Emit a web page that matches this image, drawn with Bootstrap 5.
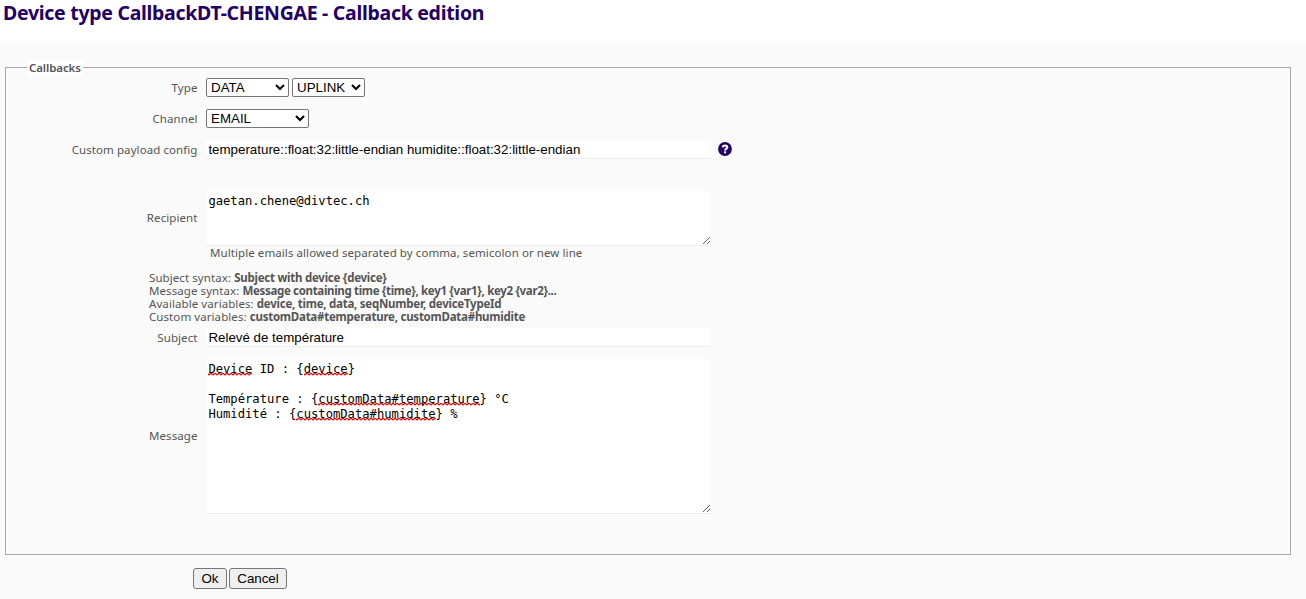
<!DOCTYPE html>
<html lang="en">
<head>
<meta charset="utf-8">
<meta name="viewport" content="width=device-width, initial-scale=1">
<title>Callback edition</title>
<link rel="stylesheet" href="https://cdn.jsdelivr.net/npm/bootstrap@5.3.0/dist/css/bootstrap.min.css">
<style>
body{font:11.5px/13px "Noto Sans","Open Sans",sans-serif;letter-spacing:.08px;color:#555;background:#fafafa;overflow:hidden}
.page-head{height:41px;padding:0 3px}
.page-head h1{font:700 19.5px/26px "Noto Sans",sans-serif;letter-spacing:-.29px;color:#220066;margin:0}
.work{padding:19px 15px 0 5px}
fieldset.frame{border:1px solid #a9a9a9;height:495px}
.frame legend{float:none;width:auto;height:15px;margin:0 0 0 21px;padding:0 2px;font:600 11.5px/15px "Noto Sans",sans-serif;letter-spacing:-.1px;background:#fff}
.form-line{padding-top:3px;margin-bottom:9px}
.recipient-line{margin-top:32px}
.subject-line{margin:5px 0 12px}
.lbl{width:192px;flex:none;text-align:right;padding-right:.5px}
.area-line .lbl{padding-bottom:3px}
select,.plain,.line-input{font:13.333px/normal "Liberation Sans",Arial,sans-serif;letter-spacing:0;color:#000}
select{height:19px;border:1px solid #767676;border-radius:2px;background-color:#fff;padding:0}
.selects{gap:3px}
.sel-data{width:83px}.sel-up{width:73px}.sel-chan{width:103px}
.field{width:504.5px;background:#fff;border:0;border-bottom:1px solid #eee;color:#000}
.line-input{height:19px;line-height:18px;padding:1px 2px 0 2.4px}
.area{font:12.18px/15px "DejaVu Sans Mono",monospace;letter-spacing:0;padding:3px 2px 0 2.4px;resize:both;overflow:auto;white-space:pre}
.area-short{height:55px}.area-tall{height:155px}
.typo{background:url("data:image/svg+xml,%3Csvg xmlns='http://www.w3.org/2000/svg' width='4' height='3'%3E%3Cpath d='M-1 0L1 2L3 0L5 2' fill='none' stroke='red' stroke-width='1.2'/%3E%3C/svg%3E") repeat-x 0 100%}
.hint{padding-left:204px;height:13px}
.syntax{padding:12px 0 0 143px}
.syntax b{letter-spacing:-.25px}
.syntax .tight{letter-spacing:-.33px}
.help-icon{margin:-1px 0 0 -.5px}
.plain{height:21px;padding:0;border:1px solid #767676;border-radius:3px;background:#efefef}
.actions{padding:13px 0 0 188px;gap:2px}
.b-ok{width:34px}.b-cancel{width:58px}
</style>
</head>
<body>
<header class="page-head bg-white"><h1>Device type CallbackDT-CHENGAE - Callback edition</h1></header>
<main class="work">
  <fieldset class="frame">
    <legend>Callbacks</legend>
    <div class="form-line d-flex gap-2 align-items-center">
      <label class="lbl">Type</label>
      <div class="selects d-flex">
        <select class="sel-data"><option>DATA</option></select>
        <select class="sel-up"><option>UPLINK</option></select>
      </div>
    </div>
    <div class="form-line d-flex gap-2 align-items-center">
      <label class="lbl">Channel</label>
      <select class="sel-chan"><option>EMAIL</option></select>
    </div>
    <div class="form-line d-flex gap-2 align-items-center">
      <label class="lbl">Custom payload config</label>
      <div class="field line-input">temperature::float:32:little-endian humidite::float:32:little-endian</div>
      <svg class="help-icon" width="14" height="14" viewBox="0 0 14 14" aria-label="Help"><circle cx="7" cy="7" r="6.9" fill="#220066"/><path d="M4.7 5.4C4.9 3.9 5.8 3.4 7 3.4C8.5 3.4 9.3 4.2 9.3 5.2C9.3 6.6 7.1 6.7 7.1 8.4" fill="none" stroke="#fff" stroke-width="2"/><rect x="6.1" y="9.3" width="2" height="2" fill="#fff"/></svg>
    </div>
    <div class="recipient-line area-line d-flex gap-2 align-items-center">
      <label class="lbl">Recipient</label>
      <div class="field area area-short">gaetan.chene@divtec.ch</div>
    </div>
    <div class="hint">Multiple emails allowed separated by comma, semicolon or new line</div>
    <div class="syntax">
      <div>Subject syntax: <b>Subject with device {device}</b></div>
      <div>Message syntax: <b class="tight">Message containing time {time}, key1 {var1}, key2 {var2}...</b></div>
      <div>Available variables: <b>device, time, data, seqNumber, deviceTypeId</b></div>
      <div>Custom variables: <b>customData#temperature, customData#humidite</b></div>
    </div>
    <div class="subject-line d-flex gap-2 align-items-center">
      <label class="lbl">Subject</label>
      <div class="field line-input">Relevé de température</div>
    </div>
    <div class="area-line d-flex gap-2 align-items-center">
      <label class="lbl">Message</label>
      <div class="field area area-tall"><span class="typo">Device</span> ID : {<span class="typo">device</span>}

Température : {<span class="typo">customData#temperature</span>} °C
Humidité : {<span class="typo">customData#humidite</span>} %</div>
    </div>
  </fieldset>
  <div class="actions d-flex">
    <button class="plain b-ok" type="button">Ok</button>
    <button class="plain b-cancel" type="button">Cancel</button>
  </div>
</main>
<script src="https://cdn.jsdelivr.net/npm/bootstrap@5.3.0/dist/js/bootstrap.bundle.min.js"></script>
</body>
</html>
